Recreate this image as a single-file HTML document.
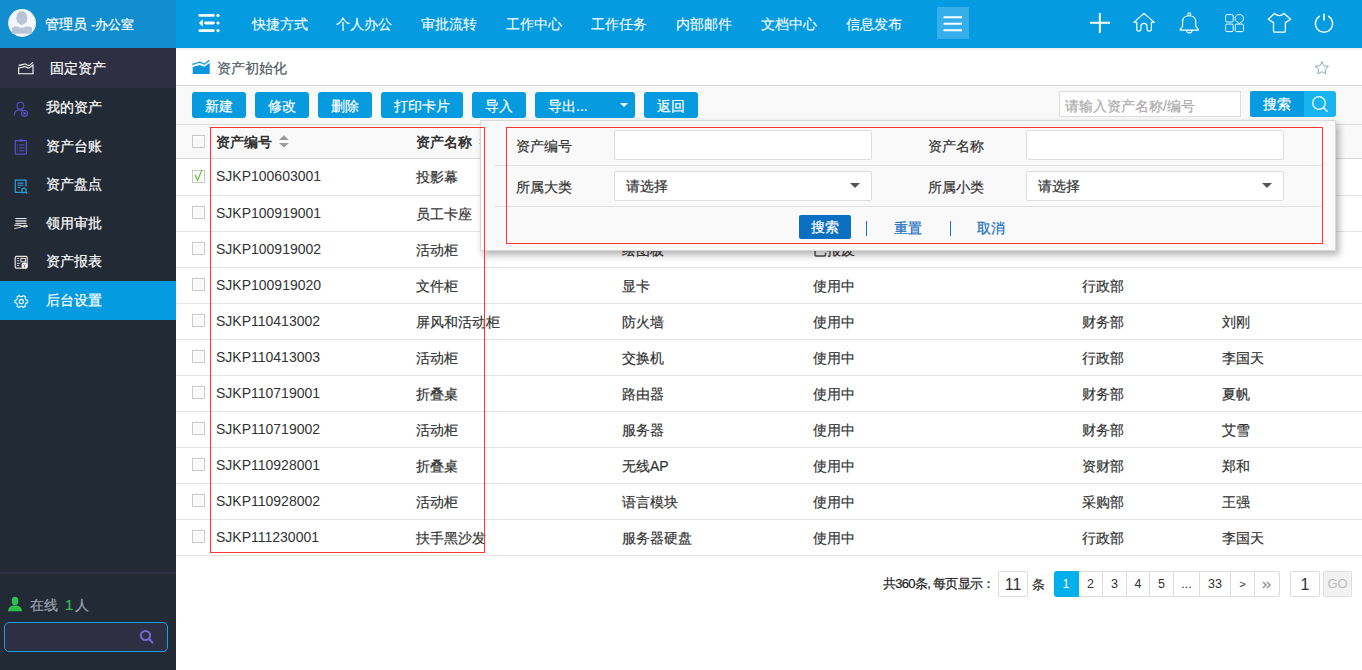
<!DOCTYPE html>
<html><head><meta charset="utf-8">
<style>
*{box-sizing:border-box;margin:0;padding:0}
body{width:1362px;height:670px;overflow:hidden;position:relative;background:#fff;font-family:"Liberation Sans",sans-serif;font-size:14px;color:#333;-webkit-text-stroke:0.2px currentColor}
.a{position:absolute}
#side{left:0;top:0;width:176px;height:670px;background:#222a36}
#shead{left:0;top:0;width:176px;height:48px;background:#128ece}
#top{left:176px;top:0;width:1186px;height:48px;background:#049be0}
.nav{top:15px;color:#fff;font-size:14px;line-height:18px;white-space:nowrap;-webkit-text-stroke:0.1px #fff}
.mi{left:0;width:176px;height:39px;color:#fff;font-size:14px}
.mi .t{position:absolute;left:46px;top:10px;line-height:18px;white-space:nowrap}
.mi svg{position:absolute;left:13px;top:12px}
.btn{top:92px;height:26px;background:#069ade;color:#fff;border-radius:3px;text-align:center;line-height:28px;font-size:14px;white-space:nowrap}
.row{left:176px;width:1186px;height:36px;border-bottom:1px solid #e4e4e4;background:#fff}
.cell{position:absolute;top:9px;line-height:18px;white-space:nowrap;color:#333}
.cb{position:absolute;left:16px;top:10px;width:13px;height:13px;border:1px solid #c8c8c8;background:#f9f9f9;box-shadow:inset 0 0 0 1px #fff}
.pg{-webkit-text-stroke:0;top:571px;height:26px;border:1px solid #ddd;border-left:none;text-align:center;line-height:25px;font-size:12.5px;color:#333;background:#fff}
.lbl{position:absolute;line-height:18px;white-space:nowrap;color:#333}
.inp{position:absolute;height:30px;background:#fff;border:1px solid #ddd;border-radius:2px}
.sel .t{position:absolute;left:11px;top:5px;line-height:18px;color:#333}
.sel .ar{position:absolute;right:11px;top:11px;width:0;height:0;border-left:5px solid transparent;border-right:5px solid transparent;border-top:5px solid #555}
</style></head><body>
<!-- sidebar -->
<div id="side" class="a"></div>
<div id="shead" class="a"></div>
<svg class="a" style="left:8px;top:9px" width="28" height="28" viewBox="0 0 28 28"><circle cx="14.05" cy="14" r="13.9" fill="#f3f6fa"/><ellipse cx="13.8" cy="8.9" rx="5.5" ry="7" fill="#b9c5d6"/><path d="M3.8 19 Q4.5 17.6 7 17.4 Q10 17.2 12 18.8 L15.5 18.8 Q17.5 17.2 20.5 17.4 Q23.3 17.6 24 19 V24.85 H3.8 Z" fill="#b9c5d6"/></svg>
<div class="a" style="left:45px;top:15px;color:#fff;font-size:14px;line-height:18px;white-space:nowrap">管理员 <span style="font-size:12.5px">-办公室</span></div>
<div class="a" style="left:0;top:48px;width:176px;height:40px;background:#2e2f43"></div>
<svg class="a" style="left:12px;top:55px" width="28" height="27" viewBox="0 0 28 27"><path d="M6.65 10.3 C9 10.8 11.5 8.5 13.3 9.1 C15 9.7 15.5 10.8 16.9 10.4 C18.5 9.9 19.8 8 21 7.3" fill="none" stroke="#fff" stroke-width="1.1"/><path d="M6.65 12.9 C9 13.4 11.5 11.1 13.3 11.7 C15 12.3 15.5 13.4 16.9 13 C18.5 12.5 19.8 10.6 21 9.9 V18.75 H6.65 Z" fill="none" stroke="#fff" stroke-width="1.1"/></svg>
<div class="a" style="left:50px;top:59px;color:#fff;font-size:14px;line-height:18px;white-space:nowrap">固定资产</div>

<div class="a mi" style="top:88px"><span class="t">我的资产</span></div>
<div class="a mi" style="top:126.5px"><span class="t">资产台账</span></div>
<div class="a mi" style="top:165px"><span class="t">资产盘点</span></div>
<div class="a mi" style="top:203.5px"><span class="t">领用审批</span></div>
<div class="a mi" style="top:242px"><span class="t">资产报表</span></div>
<div class="a mi" style="top:280.5px;background:#049be0"><span class="t">后台设置</span></div>

<svg class="a" style="left:10px;top:95px" width="24" height="24" viewBox="0 0 24 24"><circle cx="10.4" cy="10.7" r="3.4" fill="none" stroke="#5a50c8" stroke-width="1.1"/><path d="M4.3 20.4 C4.3 16.6 7 14.9 10.4 14.9 C11.5 14.9 12.4 15.2 13.1 15.6" fill="none" stroke="#5a50c8" stroke-width="1.1"/><circle cx="14.5" cy="18.4" r="2.9" fill="none" stroke="#5a50c8" stroke-width="1.1"/><circle cx="14.5" cy="18.4" r="1.3" fill="#5a50c8"/></svg>
<svg class="a" style="left:10px;top:135px" width="24" height="24" viewBox="0 0 24 24"><rect x="5.3" y="5.6" width="11.1" height="13.6" rx="0.6" fill="none" stroke="#5a50c8" stroke-width="1.2"/><rect x="8.2" y="4.6" width="5.3" height="2" rx="0.8" fill="#5a50c8"/><path d="M6.8 10h1.2M9 10h5.5M6.8 12.9h1.2M9 12.9h5.5M6.8 15.8h1.2M9 15.8h5.5" stroke="#5a50c8" stroke-width="1"/></svg>
<svg class="a" style="left:10px;top:175px" width="24" height="24" viewBox="0 0 24 24"><path d="M12 17.3 H5.3 V5.2 H16 V11.5" fill="none" stroke="#2aa0dc" stroke-width="1.2"/><path d="M7.6 8.1h5.8M7.6 10.3h5.8M7.6 12.5h2.5" stroke="#2aa0dc" stroke-width="1.1"/><circle cx="14" cy="15.4" r="2.2" fill="none" stroke="#2aa0dc" stroke-width="1.2"/><path d="M15.6 17 L17.2 18.6" stroke="#2aa0dc" stroke-width="1.3"/></svg>
<svg class="a" style="left:10px;top:213px" width="24" height="24" viewBox="0 0 24 24"><path d="M5.4 5.5H16.5M5.4 10.4H16.5" stroke="#e8e8e8" stroke-width="1"/><rect x="5.4" y="6.9" width="11.1" height="2.2" fill="#a8abb0"/><path d="M4.3 12.4 Q9 11.6 12.3 13.2 Q15 14.4 17.4 13.3 Q16.5 11.4 13.2 12.9 Q9.5 15.1 4.3 15.5" fill="none" stroke="#eee6dc" stroke-width="1.1" stroke-linejoin="round"/></svg>
<svg class="a" style="left:10px;top:250px" width="24" height="24" viewBox="0 0 24 24"><rect x="5.2" y="6.4" width="12" height="11.7" rx="1" fill="none" stroke="#e8e0d8" stroke-width="1.2"/><path d="M6.8 8.4h2.4M6.8 10.75h2.4M6.8 13.4h3.4M6.8 15.4h2.4" stroke="#cfcfcf" stroke-width="1"/><rect x="10.9" y="8.4" width="4.5" height="3.4" fill="none" stroke="#e8e0d8" stroke-width="1.1"/><circle cx="14.5" cy="15.6" r="3" fill="#fff"/><path d="M13.3 14.2 L14.5 15.6 L15.7 14.2 M14.5 15.6 V17.5" fill="none" stroke="#b0306a" stroke-width="0.9"/></svg>
<svg class="a" style="left:10px;top:290px" width="24" height="24" viewBox="0 0 24 24"><path d="M15.54 9.05 L16.30 10.07 L17.58 10.28 L17.58 12.72 L16.30 12.93 L15.54 13.95 L15.04 15.11 L15.50 16.33 L13.38 17.55 L12.56 16.55 L11.30 16.40 L10.04 16.55 L9.22 17.55 L7.10 16.33 L7.56 15.11 L7.06 13.95 L6.30 12.93 L5.02 12.72 L5.02 10.28 L6.30 10.07 L7.06 9.05 L7.56 7.89 L7.10 6.67 L9.22 5.45 L10.04 6.45 L11.30 6.60 L12.56 6.45 L13.38 5.45 L15.50 6.67 L15.04 7.89 Z" fill="none" stroke="#fff" stroke-width="1.1" stroke-linejoin="round"/><circle cx="11.3" cy="11.5" r="2.1" fill="none" stroke="#fff" stroke-width="1.1"/></svg>

<div class="a" style="left:0;top:572px;width:176px;height:2px;background:#2e3043"></div>
<svg class="a" style="left:7px;top:596px" width="16" height="16" viewBox="0 0 16 16"><ellipse cx="8" cy="5" rx="3.3" ry="4.2" fill="#2fbf4a"/><path d="M1 15.2 C1.5 11 4 10 6 9.6 L10 9.6 C12 10 14.5 11 15 15.2 Z" fill="#2fbf4a"/></svg>
<div class="a" style="left:30px;top:596px;font-size:14px;line-height:18px;color:#9aa3ad;white-space:nowrap">在线 <span style="color:#2fbf4a;margin-left:3px;margin-right:2px;font-size:15px">1</span>人</div>
<div class="a" style="left:4px;top:622px;width:164px;height:30px;border:1px solid #1a9fe0;border-radius:5px;background:#2e2f43"></div>
<svg class="a" style="left:139px;top:629px" width="16" height="16" viewBox="0 0 16 16"><circle cx="6.5" cy="6.5" r="4.6" fill="none" stroke="#7a66d6" stroke-width="2"/><path d="M10 10 L14 14" stroke="#7a66d6" stroke-width="2.2"/></svg>

<!-- top bar -->
<div id="top" class="a"></div>
<svg class="a" style="left:190px;top:5px" width="40" height="35" viewBox="0 0 40 35"><path d="M9.8 10.4H23.4M15.5 18H23.4M9.8 25.6H23.4" stroke="#fff" stroke-width="2.9" stroke-linecap="round"/><circle cx="28" cy="10.4" r="1.6" fill="#fff"/><circle cx="28" cy="18" r="1.6" fill="#fff"/><circle cx="28" cy="25.6" r="1.6" fill="#fff"/><path d="M8.9 18 L12.8 14.3 L12.8 21.7 Z" fill="#fff"/></svg>
<div class="a nav" style="left:252px">快捷方式</div>
<div class="a nav" style="left:336px">个人办公</div>
<div class="a nav" style="left:421px">审批流转</div>
<div class="a nav" style="left:506px">工作中心</div>
<div class="a nav" style="left:591px">工作任务</div>
<div class="a nav" style="left:676px">内部邮件</div>
<div class="a nav" style="left:761px">文档中心</div>
<div class="a nav" style="left:846px">信息发布</div>
<div class="a" style="left:937px;top:7px;width:32px;height:32px;background:#36aeea"></div>
<svg class="a" style="left:940px;top:10px" width="26" height="26" viewBox="0 0 26 26"><path d="M3.6 7.3h18.4M3.6 13.8h18.4M3.6 20.3h18.4" stroke="#fff" stroke-width="1.9"/></svg>
<!-- right icons -->
<svg class="a" style="left:1080px;top:5px" width="40" height="40" viewBox="0 0 40 40"><path d="M19.85 8.1V27.9M10 17.8H30" stroke="#fff" stroke-width="2"/></svg>
<svg class="a" style="left:1128px;top:8px" width="32" height="28" viewBox="0 0 32 28"><path d="M5.85 14.4 L16 5.4 L26.3 14.4 L23.4 14.4 L23.4 21 A2.2 2.2 0 0 1 19 21 L19 18 A3.05 3.05 0 0 0 12.95 18 L12.95 21 A2.09 2.09 0 0 1 8.77 21 L8.77 14.4 Z" fill="none" stroke="#fff" stroke-width="1.2" stroke-linejoin="round"/></svg>
<svg class="a" style="left:1174px;top:8px" width="30" height="28" viewBox="0 0 30 28"><path d="M8.57 18.4 L8.57 13.5 C8.57 9.8 11.5 7.73 15.1 7.73 C18.7 7.73 21.7 9.8 21.7 13.5 L21.7 18.4 L24.2 21.2 Q24.7 22.15 23.7 22.15 L6.8 22.15 Q5.8 22.15 6.3 21.2 Z" fill="none" stroke="#fff" stroke-width="1.2" stroke-linejoin="round"/><circle cx="15.3" cy="6.2" r="1.4" fill="none" stroke="#fff" stroke-width="1.1"/><path d="M12.6 22.15 A2.7 2.7 0 0 0 18 22.15" fill="none" stroke="#fff" stroke-width="1.2"/></svg>
<svg class="a" style="left:1218px;top:8px" width="30" height="28" viewBox="0 0 30 28"><rect x="7.6" y="6.6" width="7.6" height="7.4" rx="1.4" fill="none" stroke="#fff" stroke-width="0.95"/><path d="M19.4 6.6 H23.2 L25.4 8.9 V12.3 L21.3 15.6 L17.2 12.3 V8.9 Z" fill="none" stroke="#fff" stroke-width="0.95" stroke-linejoin="round"/><rect x="7.6" y="16.1" width="7.6" height="7.5" rx="1.2" fill="none" stroke="#fff" stroke-width="0.95"/><rect x="17.3" y="16.1" width="8.2" height="7.5" rx="1.2" fill="none" stroke="#fff" stroke-width="0.95"/></svg>
<svg class="a" style="left:1262px;top:8px" width="34" height="28" viewBox="0 0 34 28"><path d="M12.5 5.43 L6.27 11.28 L11.5 14.6 L11.5 23.2 Q11.5 24.2 12.5 24.2 L22.4 24.2 Q23.4 24.2 23.4 23.2 L23.4 14.6 L28.6 11.28 L22.1 5.43 Q19.5 7.6 17.3 7.6 Q15 7.6 12.5 5.43 Z" fill="none" stroke="#fff" stroke-width="1.3" stroke-linejoin="round"/></svg>
<svg class="a" style="left:1308px;top:8px" width="32" height="28" viewBox="0 0 32 28"><path d="M11.7 8.15 A8.6 8.6 0 1 0 20.3 8.15" fill="none" stroke="#fff" stroke-width="1.4"/><path d="M16 5.8 V12.5" stroke="#fff" stroke-width="1.7"/></svg>
<!-- breadcrumb -->
<div class="a" style="left:176px;top:48px;width:1186px;height:38px;background:#fff;border-bottom:1px solid #d6d6d6"></div>
<div class="a" style="left:176px;top:48px;width:1186px;height:3px;background:linear-gradient(rgba(0,0,0,.07),rgba(0,0,0,0))"></div>
<svg class="a" style="left:190px;top:58px" width="22" height="18" viewBox="0 0 22 18"><path d="M2.3 6.3 L6 5.3 L9.8 4.1 L14.3 6.3 L19.5 2.2" fill="none" stroke="#0a96dc" stroke-width="1.2" stroke-linejoin="round"/><path d="M2.7 8.9 L6 8 L9.8 7.1 L14.3 8.75 L19.7 5 V16 H2.7 Z" fill="#0a96dc"/></svg>
<div class="a" style="left:217px;top:59px;color:#4f5862;font-size:14px;line-height:18px;white-space:nowrap">资产初始化</div>
<svg class="a" style="left:1308px;top:55px" width="28" height="27" viewBox="0 0 28 27"><path d="M13.90 6.50 L15.81 10.78 L20.46 11.27 L16.98 14.40 L17.96 18.98 L13.90 16.64 L9.84 18.98 L10.82 14.40 L7.34 11.27 L11.99 10.78 Z" fill="none" stroke="#94a7bf" stroke-width="1" stroke-linejoin="round"/></svg>

<!-- toolbar -->
<div class="a" style="left:176px;top:87px;width:1186px;height:38px;background:#f9f9f9"></div>
<div class="a btn" style="left:192px;width:54px">新建</div>
<div class="a btn" style="left:255px;width:54px">修改</div>
<div class="a btn" style="left:318px;width:54px">删除</div>
<div class="a btn" style="left:381px;width:82px">打印卡片</div>
<div class="a btn" style="left:472px;width:54px">导入</div>
<div class="a btn" style="left:535px;width:100px;text-align:left;padding-left:13px">导出...<span class="a" style="left:85px;top:11px;width:0;height:0;border-left:4.3px solid transparent;border-right:4.3px solid transparent;border-top:4.7px solid #fff"></span></div>
<div class="a btn" style="left:644px;width:54px">返回</div>

<div class="a" style="left:1059px;top:91px;width:182px;height:26px;border:1px solid #ddd;background:#fff"></div>
<div class="a" style="left:1065px;top:97px;color:#aaa;font-size:14px;line-height:18px;white-space:nowrap">请输入资产名称/编号</div>
<div class="a" style="left:1250px;top:91px;width:86px;height:26px;border-radius:3px;background:#18b4f0"></div>
<div class="a" style="left:1250px;top:91px;width:54px;height:26px;border-radius:3px 0 0 3px;background:#069ade;color:#fff;text-align:center;line-height:27px">搜索</div>
<svg class="a" style="left:1311px;top:95px" width="18" height="19" viewBox="0 0 18 19"><circle cx="8" cy="8" r="6.3" fill="none" stroke="#fff" stroke-width="1.25"/><path d="M12.5 12.5 L16.5 16.8" stroke="#fff" stroke-width="1.25"/></svg>

<!-- table header -->
<div class="a" style="left:176px;top:124px;width:1186px;height:35px;background:#f9f9f9;border-top:1px solid #dadada;border-bottom:1px solid #dadada"></div>
<div class="a cb" style="left:192px;top:135px"></div>
<div class="a" style="left:216px;top:133px;font-weight:bold;color:#333;line-height:18px;white-space:nowrap;-webkit-text-stroke:0">资产编号</div>
<svg class="a" style="left:270px;top:130px" width="30" height="25" viewBox="0 0 30 25"><path d="M9 9.9 L14 5.2 L18.8 9.9 Z M9 13.06 L14 17.5 L18.8 13.06 Z" fill="#9a9a9a"/></svg>
<div class="a" style="left:416px;top:133px;font-weight:bold;color:#333;line-height:18px;white-space:nowrap;-webkit-text-stroke:0">资产名称</div>
<svg class="a" style="left:470px;top:130px" width="30" height="25" viewBox="0 0 30 25"><path d="M9 9.9 L14 5.2 L18.8 9.9 Z M9 13.06 L14 17.5 L18.8 13.06 Z" fill="#9a9a9a"/></svg>

<div class="a row" style="top:159px;height:37px">
<div class="cb" style="top:11px"></div><svg class="a" style="left:16px;top:8px" width="14" height="16" viewBox="0 0 14 16"><path d="M3 7.8 L5.6 13.3 L10 2.8" fill="none" stroke="#5cc830" stroke-width="1.1"/></svg>
<div class="cell" style="left:40px;top:8px;-webkit-text-stroke:0">SJKP100603001</div>
<div class="cell" style="left:240px;top:9px">投影幕</div>
</div>
<div class="a row" style="top:196px;height:36px">
<div class="cb"></div>
<div class="cell" style="left:40px;top:8px;-webkit-text-stroke:0">SJKP100919001</div>
<div class="cell" style="left:240px;top:9px">员工卡座</div>
</div>
<div class="a row" style="top:232px;height:36px">
<div class="cb"></div>
<div class="cell" style="left:40px;top:8px;-webkit-text-stroke:0">SJKP100919002</div>
<div class="cell" style="left:240px;top:9px">活动柜</div>
<div class="cell" style="left:446px;top:9px">绘图板</div>
<div class="cell" style="left:637px;top:9px">已报废</div>
</div>
<div class="a row" style="top:268px;height:36px">
<div class="cb"></div>
<div class="cell" style="left:40px;top:8px;-webkit-text-stroke:0">SJKP100919020</div>
<div class="cell" style="left:240px;top:9px">文件柜</div>
<div class="cell" style="left:446px;top:9px">显卡</div>
<div class="cell" style="left:637px;top:9px">使用中</div>
<div class="cell" style="left:906px;top:9px">行政部</div>
</div>
<div class="a row" style="top:304px;height:36px">
<div class="cb"></div>
<div class="cell" style="left:40px;top:8px;-webkit-text-stroke:0">SJKP110413002</div>
<div class="cell" style="left:240px;top:9px">屏风和活动柜</div>
<div class="cell" style="left:446px;top:9px">防火墙</div>
<div class="cell" style="left:637px;top:9px">使用中</div>
<div class="cell" style="left:906px;top:9px">财务部</div>
<div class="cell" style="left:1046px;top:9px">刘刚</div>
</div>
<div class="a row" style="top:340px;height:36px">
<div class="cb"></div>
<div class="cell" style="left:40px;top:8px;-webkit-text-stroke:0">SJKP110413003</div>
<div class="cell" style="left:240px;top:9px">活动柜</div>
<div class="cell" style="left:446px;top:9px">交换机</div>
<div class="cell" style="left:637px;top:9px">使用中</div>
<div class="cell" style="left:906px;top:9px">行政部</div>
<div class="cell" style="left:1046px;top:9px">李国天</div>
</div>
<div class="a row" style="top:376px;height:36px">
<div class="cb"></div>
<div class="cell" style="left:40px;top:8px;-webkit-text-stroke:0">SJKP110719001</div>
<div class="cell" style="left:240px;top:9px">折叠桌</div>
<div class="cell" style="left:446px;top:9px">路由器</div>
<div class="cell" style="left:637px;top:9px">使用中</div>
<div class="cell" style="left:906px;top:9px">财务部</div>
<div class="cell" style="left:1046px;top:9px">夏帆</div>
</div>
<div class="a row" style="top:412px;height:36px">
<div class="cb"></div>
<div class="cell" style="left:40px;top:8px;-webkit-text-stroke:0">SJKP110719002</div>
<div class="cell" style="left:240px;top:9px">活动柜</div>
<div class="cell" style="left:446px;top:9px">服务器</div>
<div class="cell" style="left:637px;top:9px">使用中</div>
<div class="cell" style="left:906px;top:9px">财务部</div>
<div class="cell" style="left:1046px;top:9px">艾雪</div>
</div>
<div class="a row" style="top:448px;height:36px">
<div class="cb"></div>
<div class="cell" style="left:40px;top:8px;-webkit-text-stroke:0">SJKP110928001</div>
<div class="cell" style="left:240px;top:9px">折叠桌</div>
<div class="cell" style="left:446px;top:9px">无线AP</div>
<div class="cell" style="left:637px;top:9px">使用中</div>
<div class="cell" style="left:906px;top:9px">资财部</div>
<div class="cell" style="left:1046px;top:9px">郑和</div>
</div>
<div class="a row" style="top:484px;height:36px">
<div class="cb"></div>
<div class="cell" style="left:40px;top:8px;-webkit-text-stroke:0">SJKP110928002</div>
<div class="cell" style="left:240px;top:9px">活动柜</div>
<div class="cell" style="left:446px;top:9px">语言模块</div>
<div class="cell" style="left:637px;top:9px">使用中</div>
<div class="cell" style="left:906px;top:9px">采购部</div>
<div class="cell" style="left:1046px;top:9px">王强</div>
</div>
<div class="a row" style="top:520px;height:36px">
<div class="cb"></div>
<div class="cell" style="left:40px;top:8px;-webkit-text-stroke:0">SJKP111230001</div>
<div class="cell" style="left:240px;top:9px">扶手黑沙发</div>
<div class="cell" style="left:446px;top:9px">服务器硬盘</div>
<div class="cell" style="left:637px;top:9px">使用中</div>
<div class="cell" style="left:906px;top:9px">行政部</div>
<div class="cell" style="left:1046px;top:9px">李国天</div>
</div>


<!-- pagination -->
<div class="a" style="left:883px;top:576px;font-size:13px;line-height:16px;color:#222;white-space:nowrap;letter-spacing:-0.7px">共360条, 每页显示：</div>
<div class="a" style="left:998px;top:571px;width:30px;height:26px;border:1px solid #ddd;border-radius:2px;text-align:center;line-height:26px;font-size:16px;color:#333;-webkit-text-stroke:0">11</div>
<div class="a" style="left:1032px;top:577px;font-size:13px;line-height:16px;color:#333">条</div>
<div class="a pg" style="left:1054px;width:25px;background:#00b0ec;color:#fff;border-color:#00b0ec;border-radius:3px 0 0 3px">1</div>
<div class="a pg" style="left:1079px;width:24px">2</div>
<div class="a pg" style="left:1103px;width:24px">3</div>
<div class="a pg" style="left:1127px;width:23px">4</div>
<div class="a pg" style="left:1150px;width:24px">5</div>
<div class="a pg" style="left:1174px;width:26px">...</div>
<div class="a pg" style="left:1200px;width:31px">33</div>
<div class="a pg" style="left:1231px;width:24px;font-size:11px">&gt;</div>
<div class="a pg" style="left:1255px;width:25px;border-radius:0 3px 3px 0"><svg class="a" style="left:7px;top:9px" width="10" height="8" viewBox="0 0 10 8"><path d="M1 1 L4 4 L1 7 M5 1 L8 4 L5 7" fill="none" stroke="#999" stroke-width="1.6"/></svg></div>
<div class="a" style="left:1290px;top:571px;width:30px;height:26px;border:1px solid #ddd;border-radius:2px;text-align:center;line-height:26px;font-size:16px;color:#333;-webkit-text-stroke:0">1</div>
<div class="a" style="left:1323px;top:571px;width:29px;height:26px;border:1px solid #ddd;border-radius:2px;text-align:center;line-height:24px;font-size:13px;color:#bbb;background:#f2f2f2;-webkit-text-stroke:0">GO</div>

<!-- popup -->
<div class="a" style="left:480px;top:120px;width:856px;height:131px;background:#f9f9f9;border:1px solid #d8d8d8;box-shadow:3px 4px 7px rgba(0,0,0,.3)"></div>
<div class="a" style="left:495px;top:165px;width:827px;height:1px;background:#e2e2e2"></div>
<div class="a" style="left:495px;top:206px;width:827px;height:1px;background:#e2e2e2"></div>
<div class="lbl" style="left:516px;top:137px">资产编号</div>
<div class="inp" style="left:614px;top:130px;width:258px"></div>
<div class="lbl" style="left:928px;top:137px">资产名称</div>
<div class="inp" style="left:1026px;top:130px;width:258px"></div>
<div class="lbl" style="left:516px;top:178px">所属大类</div>
<div class="inp sel" style="left:614px;top:171px;width:258px"><span class="t">请选择</span><span class="ar"></span></div>
<div class="lbl" style="left:928px;top:178px">所属小类</div>
<div class="inp sel" style="left:1026px;top:171px;width:258px"><span class="t">请选择</span><span class="ar"></span></div>
<div class="a" style="left:799px;top:215px;width:52px;height:24px;background:#0b6fc2;border-radius:2px;color:#fff;text-align:center;line-height:24px">搜索</div>
<div class="a" style="left:866px;top:221px;width:1px;height:15px;background:#1a6fc0"></div>
<div class="lbl" style="left:894px;top:219px;color:#1a6fc0">重置</div>
<div class="a" style="left:950px;top:221px;width:1px;height:15px;background:#1a6fc0"></div>
<div class="lbl" style="left:977px;top:219px;color:#1a6fc0">取消</div>
<div class="a" style="left:506px;top:127px;width:817px;height:117px;border:1px solid #fd3434"></div>
<div class="a" style="left:210px;top:127px;width:275px;height:426px;border:1px solid #fd3434"></div>
</body></html>
